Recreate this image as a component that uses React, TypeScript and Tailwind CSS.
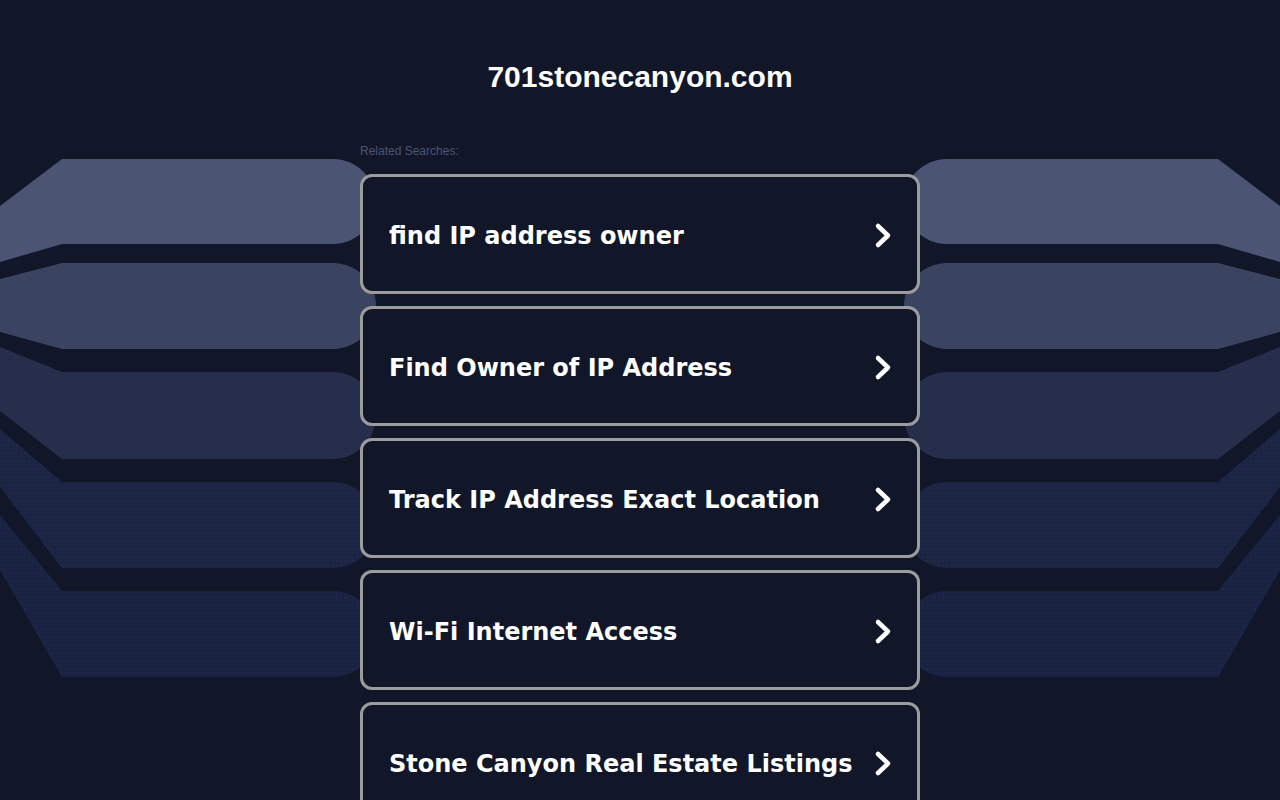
const searches = [
  "find IP address owner",
  "Find Owner of IP Address",
  "Track IP Address Exact Location",
  "Wi-Fi Internet Access",
  "Stone Canyon Real Estate Listings",
];

// one band of the backdrop: slanted outer end, flat body, rounded inner cap
type Band = { top: number; bottom: number; outTop: number; outBottom: number; fill: string };

const bands: Band[] = [
  { top: 159, bottom: 244, outTop: 206, outBottom: 262, fill: "#4b5573" },
  { top: 263, bottom: 349, outTop: 279, outBottom: 332, fill: "#3a4360" },
  { top: 372, bottom: 459, outTop: 347, outBottom: 411, fill: "#262e4b" },
  { top: 482, bottom: 568, outTop: 429, outBottom: 487, fill: "url(#dots4)" },
  { top: 591, bottom: 677, outTop: 515, outBottom: 570, fill: "url(#dots5)" },
];

function leftPath(b: Band) {
  const mid = (b.top + b.bottom) / 2;
  const r = (b.bottom - b.top) / 2;
  return `M0 ${b.outTop} L62 ${b.top} L333 ${b.top} C${333 + r * 0.55} ${b.top} 376 ${mid - r * 0.55} 376 ${mid} C376 ${mid + r * 0.55} ${333 + r * 0.55} ${b.bottom} 333 ${b.bottom} L62 ${b.bottom} L0 ${b.outBottom} Z`;
}

function Backdrop() {
  return (
    <svg className="pointer-events-none absolute inset-0 h-[800px] w-[1280px]" viewBox="0 0 1280 800">
      <defs>
        <pattern id="dots4" width="4" height="4" patternUnits="userSpaceOnUse">
          <rect width="4" height="4" fill="#1c2444" />
          <circle cx="1" cy="1" r="0.6" fill="#273055" />
        </pattern>
        <pattern id="dots5" width="4" height="4" patternUnits="userSpaceOnUse">
          <rect width="4" height="4" fill="#1a2242" />
          <circle cx="1" cy="1" r="0.6" fill="#252e52" />
        </pattern>
      </defs>
      {bands.map((b, i) => (
        <g key={i} fill={b.fill}>
          <path d={leftPath(b)} />
          <path d={leftPath(b)} transform="translate(1280 0) scale(-1 1)" />
        </g>
      ))}
    </svg>
  );
}

function Chevron() {
  return (
    <svg width="20" height="28" viewBox="0 0 20 28" className="shrink-0">
      <polyline points="5,4 15,13.5 5,23" fill="none" stroke="#ffffff" strokeWidth="4.5" strokeLinecap="round" strokeLinejoin="round" />
    </svg>
  );
}

export default function App() {
  return (
    <div className="relative h-[800px] overflow-hidden bg-[#111729]">
      <Backdrop />
      <div className="relative mx-auto w-[560px]">
        <h1 className="pt-[59px] text-center font-['Liberation_Sans',Arial,sans-serif] text-[30px] font-bold leading-[36px] text-white">
          701stonecanyon.com
        </h1>
        <p className="mt-[49px] font-['Liberation_Sans',Arial,sans-serif] text-[12px] leading-[14px] text-[#4b5573]">
          Related Searches:
        </p>
        <div className="mt-[16px] flex flex-col gap-[12px]">
          {searches.map((s) => (
            <a
              key={s}
              href="#"
              className="flex h-[120px] items-center justify-between rounded-[12px] border-[3px] border-[#9c9c9c] bg-[#111729] pl-[26px] pr-[24px] pt-[3px]"
            >
              <span className="pt-[1px] font-['DejaVu_Sans',Verdana,sans-serif] text-[24px] font-bold text-white">{s}</span>
              <Chevron />
            </a>
          ))}
        </div>
      </div>
    </div>
  );
}
